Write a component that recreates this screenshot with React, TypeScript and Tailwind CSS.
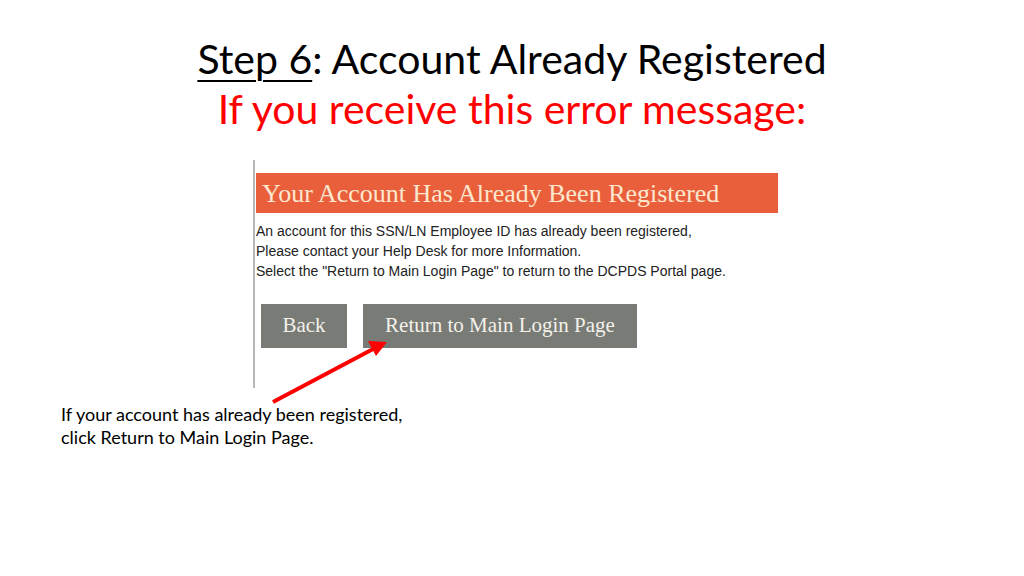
import React from "react";

export default function App() {
  return (
    <div className="relative w-[1024px] h-[576px] bg-white overflow-hidden">
      <div className="pt-[34px] text-center text-[41px] leading-[50px] font-['Lato','Open_Sans',sans-serif]">
        <div className="text-black">
          <span className="underline decoration-2 underline-offset-[6px]">Step 6</span>: Account Already Registered
        </div>
        <div className="text-[#ff0000]">If you receive this error message:</div>
      </div>

      <div className="mt-[26px] ml-[253px] w-[525px] h-[228px] border-l-2 border-[#b8b8b8] pt-[13px] pl-px">
        <div className="h-[40px] w-[522px] bg-[#e95f3b] pl-[6px] flex items-center font-['Liberation_Serif',serif] text-[26px] text-[#fce7cf]">
          Your Account Has Already Been Registered
        </div>
        <div className="mt-[8px] text-[14px] leading-[20px] text-[#222] font-['Liberation_Sans',Arial,sans-serif]">
          <div>An account for this SSN/LN Employee ID has already been registered,</div>
          <div>Please contact your Help Desk for more Information.</div>
          <div>Select the "Return to Main Login Page" to return to the DCPDS Portal page.</div>
        </div>
        <div className="mt-[23px] ml-[5px] flex gap-[16px] font-['Liberation_Serif',serif] text-[21px] text-[#f4f1ea]">
          <div className="w-[86px] h-[44px] bg-[#787b76] flex items-center justify-center">Back</div>
          <div className="w-[274px] h-[44px] bg-[#787b76] flex items-center justify-center">Return to Main Login Page</div>
        </div>
      </div>

      <div className="mt-[15px] ml-[61px] text-[18px] leading-[23px] text-black font-['Lato','Open_Sans',sans-serif]">
        <div>If your account has already been registered,</div>
        <div>click Return to Main Login Page.</div>
      </div>

      <svg className="absolute left-0 top-0" width="1024" height="576" viewBox="0 0 1024 576">
        <line x1="273" y1="402" x2="375" y2="348" stroke="#ff0000" strokeWidth="4" />
        <polygon points="387,342 368,341 376,356" fill="#ff0000" />
      </svg>
    </div>
  );
}
